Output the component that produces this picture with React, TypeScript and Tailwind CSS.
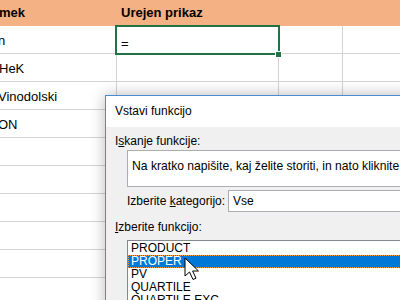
import React from "react";

const rows = [
  { a: "n", ml: "ml-[-2px]" },
  { a: "HeK", ml: "ml-[-1px]" },
  { a: "Vinodolski", ml: "ml-[-2px]" },
  { a: "ON", ml: "ml-[-2px]" },
  { a: "", ml: "" },
  { a: "", ml: "" },
  { a: "", ml: "" },
  { a: "", ml: "" },
  { a: "", ml: "" },
  { a: "", ml: "" },
];

const items = ["PRODUCT", "PROPER", "PV", "QUARTILE", "QUARTILE.EXC", "QUARTILE.INC"];

export default function App() {
  return (
    <div className="relative w-[400px] h-[300px] overflow-hidden bg-white font-['Liberation_Sans',Arial,sans-serif] text-black">
      {/* header */}
      <div className="flex h-[26px] bg-[#f4b183] text-[13px] font-bold leading-[16px]">
        <div className="w-[117px] flex items-center overflow-hidden pl-0">
          <span className="ml-[-1px]">mek</span>
        </div>
        <div className="w-[162px] flex items-center pl-[4px]">Urejen prikaz</div>
        <div className="flex-1" />
      </div>
      {/* rows */}
      {rows.map((r, i) => (
        <div key={i} className="flex h-[28px] border-b border-[#d4d4d4] text-[13px] leading-[16px]">
          <div className="w-[117px] border-r border-[#d4d4d4] flex items-end pb-[4px] overflow-hidden whitespace-nowrap">
            <span className={r.ml}>{r.a}</span>
          </div>
          <div className="w-[162px] border-r border-[#d4d4d4] flex items-end pb-[1px] pl-[4px]">
            {i === 0 ? "=" : ""}
          </div>
          <div className="w-[64px] border-r border-[#d4d4d4]" />
          <div className="flex-1" />
        </div>
      ))}

      {/* active cell */}
      <div className="absolute left-[115px] top-[25px] w-[165px] h-[30px] border-2 border-[#217346]" />
      <div className="absolute left-[275px] top-[51px] w-[7px] h-[7px] bg-[#217346] border border-white" />

      {/* dialog */}
      <div className="absolute left-[105px] top-[95px] w-[320px] h-[230px] border border-[#4a8bd4] bg-[#f0f0f0] shadow-[0_0_14px_rgba(0,0,0,0.28)] text-[12px] leading-[14px]">
        <div className="h-[31px] bg-white flex items-center pl-[9px] pb-[1px]">Vstavi funkcijo</div>
        <div className="pl-[9px] pt-[7px]">
          <div>
            I<span className="underline">s</span>kanje funkcije:
          </div>
          <div className="ml-[12px] mt-[2px] h-[37px] bg-white border border-[#abadb3] pl-[4px] pt-[8px] whitespace-nowrap overflow-hidden text-[12.15px]">
            Na kratko napišite, kaj želite storiti, in nato kliknite »Pojdi«
          </div>
          <div className="flex items-center mt-[3px] ml-[12px]">
            <div className="w-[101px]">
              Izberite <span className="underline">k</span>ategorijo:
            </div>
            <div className="flex-1 h-[22px] bg-white border border-[#abadb3] flex items-center pl-[4px]">Vse</div>
          </div>
          <div className="mt-[8px]">
            <span className="underline">I</span>zberite funkcijo:
          </div>
          <div className="ml-[12px] mt-[6px] bg-white border border-[#828790] pt-[1px] h-[80px] overflow-hidden">
            {items.map((it, i) => (
              <div
                key={it}
                className={
                  i === 1
                    ? "h-[13px] leading-[11px] bg-[#0078d7] text-white border border-dotted border-[#f0a040] pl-[2px]"
                    : "h-[13px] leading-[13px] pl-[3px]"
                }
              >
                {it}
              </div>
            ))}
          </div>
        </div>
      </div>

      {/* mouse cursor */}
      <svg className="absolute left-[184px] top-[257px]" width="17" height="24" viewBox="0 0 17 24">
        <path
          d="M1 1 L1 19 L5.5 15 L9 22.5 L12 21.2 L8.6 14 L14.5 14 Z"
          fill="white"
          stroke="black"
          strokeWidth="1"
          strokeLinejoin="miter"
        />
      </svg>
    </div>
  );
}
